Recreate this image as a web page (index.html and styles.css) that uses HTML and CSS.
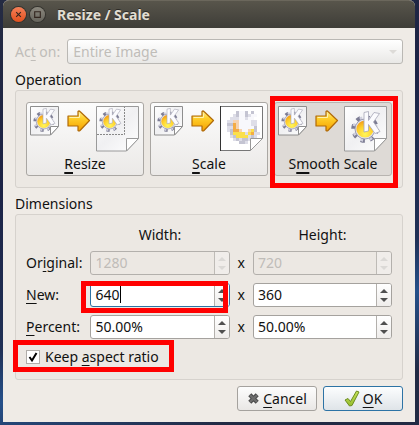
FILE: index.html
```html
<!DOCTYPE html>
<html lang="en">
<head>
<meta charset="utf-8">
<title>Resize / Scale</title>
<link rel="stylesheet" href="styles.css">
</head>
<body>
<svg class="defs" aria-hidden="true">
  <defs>
    <linearGradient id="paper" x1="0" y1="0" x2="1" y2="1"><stop offset="0" stop-color="#fff"/><stop offset=".5" stop-color="#f0f0f2"/><stop offset="1" stop-color="#fff"/></linearGradient>
    <linearGradient id="gold" x1="0" y1="0" x2="0" y2="1"><stop offset="0" stop-color="#fff09a"/><stop offset=".35" stop-color="#ffd02c"/><stop offset="1" stop-color="#f5a000"/></linearGradient>
    <radialGradient id="sun" cx=".5" cy=".8" r=".8"><stop offset="0" stop-color="#fff65a"/><stop offset=".55" stop-color="#ffd12c"/><stop offset="1" stop-color="#f49a18"/></radialGradient>
    <linearGradient id="leaf" x1="0" y1="0" x2="0" y2="1"><stop offset="0" stop-color="#c8e45c"/><stop offset="1" stop-color="#94bc2c"/></linearGradient>
    <symbol id="gear" viewBox="0 0 30 32">
      <circle cx="14" cy="18" r="11.8" fill="none" stroke="#7c7c94" stroke-width="4" stroke-dasharray="4.2 5.07"/>
      <circle cx="14" cy="18" r="11.2" fill="none" stroke="#d0d0de" stroke-width="3.2" stroke-dasharray="2.6 6.67" stroke-dashoffset="-.8"/>
      <circle cx="14" cy="18" r="10" fill="#e2e2ec" stroke="#8c8ca2" stroke-width=".8"/>
      <circle cx="14" cy="18" r="8.6" fill="url(#sun)"/>
      <path d="M13 1.500L17.500 .5V9.500L23 1.500L28.500 2.500L22.500 11L29 20.500L24 22.500L17.500 13.500V20L13 21Z" fill="#fbfbfe" stroke="#a6a6b6" stroke-width=".8" stroke-linejoin="round"/>
    </symbol>
    <symbol id="small-doc" viewBox="0 0 30 30">
      <path d="M.5 .5H28.500V20.500L20.500 29H.5Z" fill="url(#paper)" stroke="#8e8e8e"/>
      <use href="#gear" x="3" y="2" width="23" height="24"/>
      <path d="M28.500 20.500H20.500V29Z" fill="#fff" stroke="#8e8e8e"/>
    </symbol>
    <symbol id="big-doc" viewBox="0 0 44 46">
      <path d="M.5 .5H42.500V32.500L30.500 45H.5Z" fill="url(#paper)" stroke="#9a9a9a"/>
      <path d="M42.500 32.500H30.500V45Z" fill="#fff" stroke="#9a9a9a"/>
    </symbol>
    <symbol id="arrow" viewBox="0 0 24 22">
      <path d="M1 6H11V1.500Q12 .5 13 1.500L22.500 10.500L13 20.500Q12 21.500 11 20.500V16H1Z" fill="url(#gold)" stroke="#b06a08" stroke-width="1.200" stroke-linejoin="round"/>
      <path d="M2.500 7.500H12.500V3.500" fill="none" stroke="#fff3b0"/>
    </symbol>
  </defs>
</svg>

<main class="window">
  <header class="titlebar">
    <button class="wm wm-close" type="button" aria-label="Close"><svg viewBox="0 0 16 16"><path d="M5.500 5.500l5 5m0-5l-5 5"/></svg></button>
    <button class="wm" type="button" aria-label="Maximize"><svg viewBox="0 0 16 16"><path d="M5 5h6v6H5z"/></svg></button>
    <h1>Resize / Scale</h1>
  </header>

  <form class="content">
    <div class="act">
      <label for="act">Ac<u>t</u> on:</label>
      <div class="combo">
        <select id="act" disabled><option>Entire Image</option></select>
        <i class="tri down"></i>
      </div>
    </div>

    <section>
      <h2>Operation</h2>
      <div class="group operations">
        <button class="op" type="button">
          <svg class="art" viewBox="0 0 110 46">
            <use href="#small-doc" width="30" height="30"/><use href="#arrow" x="37" y="4" width="24" height="22"/>
            <use href="#big-doc" x="66" width="44" height="46"/>
            <path d="M67 28.500H94.500V1" fill="none" stroke="#888" stroke-dasharray="2 1"/>
            <use href="#gear" x="69" y="2" width="23" height="24"/>
          </svg>
          <span><u>R</u>esize</span>
        </button>
        <button class="op" type="button">
          <svg class="art" viewBox="0 0 110 46">
            <use href="#small-doc" width="30" height="30"/><use href="#arrow" x="37" y="4" width="24" height="22"/>
            <path d="M66.500 .5H108.500V32.500L96.500 44.500H66.500Z" fill="#fff" stroke="#777"/>
            <path d="M66.500 0V45" stroke="#333"/>
            <svg x="73" y="5" width="33" height="33" viewBox="0 0 11 11" shape-rendering="crispEdges">
              <path fill="#dedee8" d="M1 2H2V1H9V3H10V7H11V8H10V9H9V10H7V11H4V10H2V9H1V7H0V3H1Z"/>
              <path stroke="#c4c4d2" d="M3 .5h1M6 .5h1M8 .5h1M3 1.500h1M6 1.500h1M0 4.500h2M9 5.500h1M1 6.500h1M9 6.500h1M1 7.500h1M2 8.500h1M8 8.500h1M3 9.500h1M5 9.500h2M4 10.500h2"/>
              <path stroke="#f8f8fc" d="M4 .5h2M4 1.500h2M8 1.500h2M4 2.500h2M7 2.500h2M4 3.500h4M4 4.500h4M4 5.500h5M5 6.500h2"/>
              <path stroke="#f6d3b0" d="M2 3.500h2M3 4.500h1M3 5.500h1M4 6.500h1M7 6.500h1"/>
              <path stroke="#f4ac44" d="M2 4.500h1M2 5.500h1M3 6.500h1M2 6.500h1M8 7.500h1"/>
              <path stroke="#fbe04c" d="M8 6.500h1M2 7.500h4M7 7.500h1M3 8.500h4"/>
            </svg>
            <path d="M108.500 32.500H96.500V44.500Z" fill="#fff" stroke="#999"/>
          </svg>
          <span><u>S</u>cale</span>
        </button>
        <div class="marked">
          <button class="op on" type="button" aria-pressed="true">
            <svg class="art" viewBox="0 0 110 46">
              <use href="#small-doc" width="30" height="30"/><use href="#arrow" x="37" y="4" width="24" height="22"/>
              <use href="#big-doc" x="66" width="44" height="46"/>
              <use href="#gear" x="72" y="5" width="32" height="32"/>
            </svg>
            <span>S<u>m</u>ooth Scale</span>
          </button>
          <i class="mark mark-op"></i>
        </div>
      </div>
    </section>

    <section>
      <h2>Dimensions</h2>
      <div class="group">
        <div class="dims">
          <span></span><span class="head">Width:</span><span></span><span class="head">Height:</span>

          <label for="ow">Or<u>i</u>ginal:</label>
          <div class="spin off"><input id="ow" value="1280" disabled><span class="steps"><button type="button" disabled aria-label="Increase"><i class="tri"></i></button><button type="button" disabled aria-label="Decrease"><i class="tri down"></i></button></span></div>
          <span>x</span>
          <div class="spin off"><input value="720" aria-label="Original height" disabled><span class="steps"><button type="button" disabled aria-label="Increase"><i class="tri"></i></button><button type="button" disabled aria-label="Decrease"><i class="tri down"></i></button></span></div>

          <label for="nw"><u>N</u>ew:</label>
          <div class="spin active"><input id="nw" value="640"><i class="caret"></i><span class="steps"><button type="button" aria-label="Increase"><i class="tri"></i></button><button type="button" aria-label="Decrease"><i class="tri down"></i></button></span><i class="mark mark-new"></i></div>
          <span>x</span>
          <div class="spin"><input value="360" aria-label="New height"><span class="steps"><button type="button" aria-label="Increase"><i class="tri"></i></button><button type="button" aria-label="Decrease"><i class="tri down"></i></button></span></div>

          <label for="pw"><u>P</u>ercent:</label>
          <div class="spin"><input id="pw" value="50.00%"><span class="steps"><button type="button" aria-label="Increase"><i class="tri"></i></button><button type="button" aria-label="Decrease"><i class="tri down"></i></button></span></div>
          <span>x</span>
          <div class="spin"><input value="50.00%" aria-label="Percent height"><span class="steps"><button type="button" aria-label="Increase"><i class="tri"></i></button><button type="button" aria-label="Decrease"><i class="tri down"></i></button></span></div>
        </div>
        <div class="keep">
          <span class="box"><input id="keep" type="checkbox" checked><svg viewBox="0 0 14 14"><path d="M3.500 7L6 10.500L10.500 3"/></svg></span>
          <label for="keep">Keep <u>a</u>spect ratio</label>
          <i class="mark mark-keep"></i>
        </div>
      </div>
    </section>

    <footer>
      <button class="btn" type="button"><svg viewBox="0 0 14 14"><path d="M3 3l8 8m0-8l-8 8" stroke="#444" stroke-width="4.600" fill="none"/><path d="M3 3l8 8m0-8l-8 8" stroke="#6c6c6c" stroke-width="2.600" fill="none"/></svg><span><u>C</u>ancel</span></button>
      <button class="btn ok" type="submit"><svg class="tick" viewBox="0 0 16 17"><path d="M1 10L4 8.500L6.500 11.500L12.500 1L15 2L8 15.500L5.500 16Z" fill="url(#leaf)" stroke="#6c8c20" stroke-linejoin="round"/></svg><span><u>O</u>K</span></button>
    </footer>
  </form>
</main>
</body>
</html>
```
FILE: styles.css
```css
* { box-sizing: border-box; }

body {
  margin: 0;
  min-height: 100vh;
  padding: 0 4px 3px 3px;
  background: linear-gradient(165deg, #252b42, #1c2346 35%, #203055 65%, #25508a 75%, #222a44 90%);
  font: 14px/20px "Noto Sans", sans-serif;
  color: #111;
}

.defs { position: absolute; width: 0; height: 0; }

button, input, select { font: inherit; color: inherit; margin: 0; padding: 0; }

h1, h2 { margin: 0; font-size: 14px; }

u { text-decoration-thickness: 1px; text-underline-offset: 3px; text-decoration-skip-ink: none; }

.window { background: #efebe6; border-radius: 6px 6px 0 0; }

.titlebar {
  display: flex;
  align-items: center;
  gap: 4px;
  height: 28px;
  padding: 0 8px;
  border-top: 1px solid #6b675c;
  border-radius: 6px 6px 0 0;
  background: linear-gradient(#58554b, #3e3d38);
  color: #e2ddd2;
}

.titlebar h1 { margin-left: 8px; font-weight: 700; text-shadow: 0 -1px #2c2b28; }

.wm {
  width: 15px;
  height: 15px;
  border: 0;
  border-radius: 50%;
  background: linear-gradient(#8b887e, #66645c);
  box-shadow: 0 0 0 1px #34332e;
}

.wm-close { background: linear-gradient(#f58058, #e1501e); }
.wm svg { display: block; fill: none; stroke: #33261f; stroke-width: 1.2; }

.content { display: flex; flex-direction: column; gap: 6px; padding: 11px 12px; }

.act { display: flex; align-items: center; gap: 7px; color: #c0bdb9; }

.combo { position: relative; flex: 1; }
.combo select {
  display: block;
  width: 100%;
  height: 25px;
  padding: 0 5px;
  border: 1px solid #bab8b4;
  border-radius: 3px;
  background: linear-gradient(#fff, #e9e8e6);
  color: #c0bdb9;
  opacity: 1;
  appearance: none;
}

h2 { font-weight: 400; }

.group { border: 1px solid #d6d2cd; border-radius: 3px; background: #ece8e3; padding: 10px; }

.operations { display: grid; grid-template-columns: repeat(3, 1fr); gap: 6px; padding: 11px 10px; }

.op {
  width: 100%;
  height: 74px;
  padding: 3px 3px 1px;
  border: 1px solid #aaa7a3;
  border-radius: 3px;
  background: linear-gradient(#fcfcfc, #ebe9e7);
  display: flex;
  flex-direction: column;
  justify-content: space-between;
  align-items: center;
}
.op.on { background: #dedad6; border-color: #b8b4b0; }
.op u { text-decoration-thickness: 2px; }
.art { display: block; width: 110px; height: 46px; }

.marked, .keep { position: relative; }

.mark { position: absolute; border: 5px solid #f00; pointer-events: none; }
.mark-op { inset: -6px -6px -12px -4px; }
.mark-new { inset: -3px 1px -7px -10px; }
.mark-keep { left: -13px; top: -7px; width: 161px; height: 32px; }

.dims {
  display: grid;
  grid-template-columns: auto minmax(0, 1fr) auto minmax(0, 1fr);
  gap: 8px;
  align-items: center;
}
.head { text-align: center; line-height: 16px; padding-top: 2px; }

.spin {
  position: relative;
  display: flex;
  height: 24px;
  border: 1px solid #a5a29e;
  border-radius: 3px;
  background: #fff;
}
.spin.active { border-color: #2d73a5; }
.spin.off { background: #ece8e3; color: #bfbcb8; border-color: #b3b0ac; }
.spin input { flex: 1; min-width: 0; border: 0; padding: 0 4px; background: none; outline: 0; }
.caret { position: absolute; left: 29px; top: 2px; width: 1px; height: 17px; background: #000; }

.steps {
  display: flex;
  flex-direction: column;
  justify-content: center;
  gap: 5px;
  width: 15px;
  border-left: 1px solid #b3b0ac;
  border-radius: 0 2px 2px 0;
  background: linear-gradient(#fff, #efedeb);
}
.steps button { display: flex; justify-content: center; border: 0; background: none; }
.spin.off .steps { background: #f1efec; opacity: .8; }

.tri { display: block; width: 0; height: 0; border: 4px solid transparent; border-top-width: 0; border-bottom-color: #505050; }
.tri.down { border-width: 4px 4px 0; border-top-color: #505050; }
.off .tri { border-bottom-color: #d8d6d3; }
.off .tri.down { border-top-color: #d8d6d3; }
.combo .tri.down { position: absolute; right: 6px; top: 11px; border-top-color: #dddbd8; }

.keep { display: flex; align-items: center; gap: 5px; margin-top: 8px; padding-bottom: 2px; }

.box { position: relative; width: 14px; height: 14px; }
.box input { display: block; width: 14px; height: 14px; border: 1px solid #b0ada9; background: #fff; appearance: none; }
.box svg { position: absolute; inset: 0; fill: none; stroke: #000; stroke-width: 2; pointer-events: none; }

footer { display: flex; justify-content: flex-end; gap: 6px; }
.btn {
  display: flex;
  align-items: center;
  justify-content: center;
  gap: 3px;
  width: 80px;
  height: 25px;
  border: 1px solid #a5a29e;
  border-radius: 3px;
  background: linear-gradient(#fdfdfd, #e9e7e5);
}
.btn.ok { border-color: #2d73a5; background: linear-gradient(#fcfdfe, #dfe4e8); }
.btn svg { width: 13px; height: 13px; }
.btn .tick { width: 16px; height: 17px; }
```
